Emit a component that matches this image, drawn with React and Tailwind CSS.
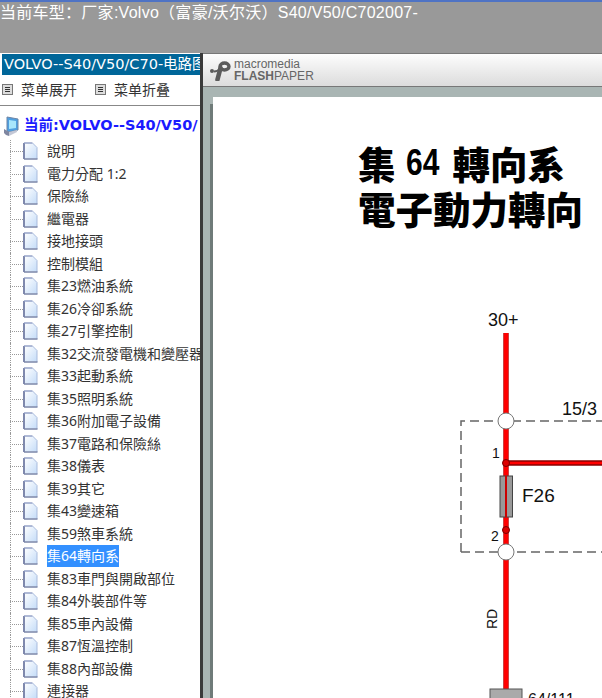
import { useState } from "react";

const items = [
  "說明",
  "電力分配 1:2",
  "保險絲",
  "繼電器",
  "接地接頭",
  "控制模組",
  "集23燃油系統",
  "集26冷卻系統",
  "集27引擎控制",
  "集32交流發電機和變壓器",
  "集33起動系統",
  "集35照明系統",
  "集36附加電子設備",
  "集37電路和保險絲",
  "集38儀表",
  "集39其它",
  "集43變速箱",
  "集59煞車系統",
  "集64轉向系",
  "集83車門與開啟部位",
  "集84外裝部件等",
  "集85車內設備",
  "集87恆溫控制",
  "集88內部設備",
  "連接器",
];

const PageIcon = () => (
  <svg width="15" height="18" viewBox="0 0 15 18" className="shrink-0">
    <defs>
      <linearGradient id="pageFill" x1="0" y1="0" x2="1" y2="1">
        <stop offset="0" stopColor="#ffffff" />
        <stop offset="1" stopColor="#c4dcf8" />
      </linearGradient>
    </defs>
    <path d="M1.5 1h8l4.5 4.5V16.5H1.5z" fill="url(#pageFill)" />
    <path d="M1 1v16" stroke="#7f89ad" strokeWidth="2" />
    <path d="M1 1h8.5" stroke="#8f9dc4" strokeWidth="1.4" />
    <path d="M9.5 1L14 5.5V17" fill="none" stroke="#a9bbdc" />
    <path d="M1 17h13.5" stroke="#7a86a8" strokeWidth="1.5" />
  </svg>
);

const MenuIcon = () => (
  <span className="flex h-[11px] w-[11px] shrink-0 flex-col justify-center gap-px border border-[#777] bg-[#ddd] px-[2px]">
    <span className="h-px bg-[#333]" />
    <span className="h-px bg-[#333]" />
    <span className="h-px bg-[#333]" />
  </span>
);

const ComputerIcon = () => (
  <svg width="16" height="21" viewBox="0 0 16 21" className="shrink-0">
    <path d="M4 1l11 2v11l-9 2-2-1z" fill="#4f9fe0" stroke="#6d85a6" />
    <path d="M6 4l7 1v7l-7 1z" fill="#a8e6fc" />
    <path d="M1 13l5 3v4l-3-1-2-2z" fill="#7f86a0" />
    <path d="M6 16l8-2v2l-8 4z" fill="#c4c8d6" />
  </svg>
);

const TreeRow = ({ label, active }) => (
  <div className="relative flex h-[22.5px] items-center pl-[23px]">
    <span className="absolute left-[10px] top-0 h-full border-l border-dotted border-[#999]" />
    <span className="absolute left-[10px] top-[11px] w-[13px] border-t border-dotted border-[#999]" />
    <PageIcon />
    <span
      className={`ml-[9px] whitespace-nowrap text-[14px] leading-[22px] ${
        active ? "bg-[#3390ff] text-white" : "text-[#333]"
      }`}
    >
      {label}
    </span>
  </div>
);

const Logo = () => (
  <div className="flex items-center gap-[3px] text-[#666]">
    <svg width="21" height="21" viewBox="0 0 21 21">
      <circle cx="2" cy="11" r="2" fill="#5c5c5c" />
      <ellipse cx="14.5" cy="6.5" rx="4.5" ry="3.5" fill="none" stroke="#5c5c5c" strokeWidth="3.4" />
      <path d="M10.5 8L7.5 19.500" stroke="#5c5c5c" strokeWidth="4.600" strokeLinecap="round" />
      <path d="M4 11.500C6 11.500 8.500 10.500 10 8.500" fill="none" stroke="#5c5c5c" strokeWidth="2" />
    </svg>
    <div className="flex flex-col font-['Liberation_Sans',sans-serif]">
      <span className="h-[11px] text-[12px] leading-[11px]">macromedia</span>
      <span className="h-[12px] text-[12px] leading-[12px]">
        <b>FLASH</b>PAPER
      </span>
    </div>
  </div>
);

const Diagram = () => (
  <svg width="389" height="601" viewBox="213 97 389 601" className="block">
    <g fontFamily="'Liberation Sans', sans-serif" fill="#111">
      <path d="M461 552v-131h141M461 552h141" fill="none" stroke="#666" strokeWidth="1.5" strokeDasharray="9 5" />
      <path d="M506 333V690" stroke="#c44" strokeWidth="6" />
      <path d="M506 333V690" stroke="#f00" strokeWidth="4" />
      <path d="M506 463H602" stroke="#800" strokeWidth="5.500" />
      <path d="M506 463H602" stroke="#f00" strokeWidth="2.500" />
      <rect x="500" y="476" width="12.500" height="41" fill="#999" stroke="#444" />
      <path d="M506 476v41" stroke="#c00" strokeWidth="2" />
      <circle cx="506" cy="463" r="3.500" fill="#d00" stroke="#700" />
      <circle cx="506" cy="530" r="3.500" fill="#d00" stroke="#700" />
      <circle cx="506" cy="421" r="8" fill="#fff" stroke="#777" />
      <circle cx="506" cy="552" r="8" fill="#fff" stroke="#777" />
      <rect x="490" y="689" width="32" height="12" fill="#aaa" stroke="#555" />
      <text x="488" y="326" fontSize="18">30+</text>
      <text x="562" y="415" fontSize="18">15/3</text>
      <text x="522" y="502" fontSize="19">F26</text>
      <text x="492" y="458" fontSize="14">1</text>
      <text x="491" y="541" fontSize="14">2</text>
      <text x="528" y="704.500" fontSize="16">64/111</text>
      <text transform="translate(497 629) rotate(-90)" fontSize="14">RD</text>
    </g>
  </svg>
);

export default function App() {
  const [current] = useState("集64轉向系");

  return (
    <div className="flex h-[698px] w-[602px] flex-col overflow-hidden bg-[#999] font-['Noto_Sans','Noto_Sans_CJK_TC',sans-serif]">
      {/* Top bar */}
      <div className="h-[53px] shrink-0 border-t-2 border-[#4f73c4] bg-[#999]">
        <p className="whitespace-nowrap font-['Liberation_Sans','Noto_Sans_CJK_SC',sans-serif] text-[16px] leading-[22px] tracking-[0.27px] text-white">
          当前车型：厂家:Volvo（富豪/沃尔沃）S40/V50/C702007-
        </p>
      </div>

      <div className="flex min-h-0 flex-1">
        {/* Left tree */}
        <aside className="w-[200px] shrink-0 overflow-hidden bg-white">
          <div className="ml-[2px] mt-[1px] h-[21px] overflow-hidden whitespace-nowrap bg-[#006699] pl-[2px] font-['DejaVu_Sans','Noto_Sans_CJK_SC',sans-serif] text-[14.500px] leading-[21px] text-white">
            VOLVO--S40/V50/C70-电路图
          </div>
          <div className="flex h-[31px] items-center border-b border-[#888] pb-[1px] pl-[2px] font-['Noto_Sans_CJK_SC',sans-serif] text-[14px] text-[#333]">
            <MenuIcon />
            <span className="ml-[8px]">菜单展开</span>
            <span className="ml-[18px]"><MenuIcon /></span>
            <span className="ml-[8px]">菜单折叠</span>
          </div>
          <div className="mt-[9px] flex h-[22px] items-center pl-[3px]">
            <ComputerIcon />
            <span className="ml-[5px] whitespace-nowrap font-['DejaVu_Sans','Noto_Sans_CJK_SC',sans-serif] text-[14.500px] font-bold text-[#1a1aff]">
              当前:VOLVO--S40/V50/
            </span>
          </div>
          <div className="mt-[3px]">
            {items.map((label) => (
              <TreeRow key={label} label={label} active={label === current} />
            ))}
          </div>
        </aside>

        {/* Divider */}
        <div className="w-[3px] shrink-0 bg-[#3a3a3a]" />

        {/* Flash viewer */}
        <main className="flex min-w-0 flex-1 flex-col bg-[#a9b5b3]">
          <div className="flex h-[34px] shrink-0 items-center border-y border-[#777] bg-gradient-to-b from-[#fdfdfd] to-[#dcdcdc] pl-[7px]">
            <Logo />
          </div>
          <div className="flex min-h-0 flex-1 pt-[10px]">
            <div className="w-[10px] shrink-0 pt-[7px]">
              <div className="ml-[7px] h-full w-[3px] bg-[#6f7b79]" />
            </div>
            <div className="relative min-w-0 flex-1 overflow-hidden bg-white">
              <Diagram />
              <div className="absolute left-[145px] top-[43px] whitespace-nowrap font-['Noto_Sans_CJK_TC',sans-serif] text-[37.500px] font-black leading-[45px] text-black">
                <p className="flex">
                  集
                  <span className="ml-[10px] mr-[15px] w-[32px] origin-left scale-x-[0.8] font-['Liberation_Sans',sans-serif] font-bold">64</span>
                  轉向系
                </p>
                <p>電子動力轉向</p>
              </div>
            </div>
          </div>
        </main>
      </div>
    </div>
  );
}
